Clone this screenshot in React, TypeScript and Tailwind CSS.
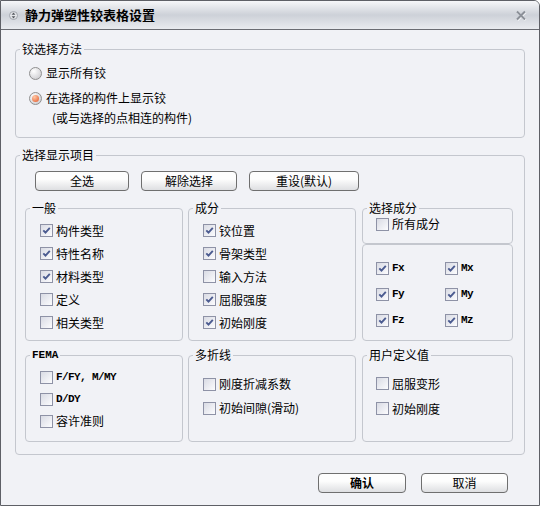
import React from "react";

const cjk = "font-['Noto_Sans_CJK_SC','Noto_Sans',sans-serif]";
const mono = "font-['Liberation_Mono',monospace]";

function Check({ on }: { on?: boolean }) {
  return (
    <span className="flex h-[13px] w-[13px] shrink-0 items-center justify-center border border-[#8e92a6] bg-linear-to-br from-[#d9dbe4] to-[#fcfcfe]">
      {on && (
        <svg width="9" height="9" viewBox="0 0 9 9">
          <path d="M1.3 4.3 L3.5 6.6 L7.8 1.9" stroke="#4b5b90" strokeWidth="1.9" fill="none" />
        </svg>
      )}
    </span>
  );
}

function Radio({ on }: { on?: boolean }) {
  return (
    <span className="flex h-[13px] w-[13px] shrink-0 items-center justify-center rounded-full border border-[#8f8f8f] bg-[radial-gradient(circle_at_35%_30%,#ffffff,#c4c4c8)]">
      {on && (
        <span className="h-[7px] w-[7px] rounded-full bg-[radial-gradient(circle_at_35%_30%,#ffc9a6,#e2582a)]" />
      )}
    </span>
  );
}

function CheckRow({ label, on, h, isMono }: { label: string; on?: boolean; h: string; isMono?: boolean }) {
  return (
    <div className={`flex items-center gap-[3px] ${h}`}>
      <Check on={on} />
      <span className={isMono ? `${mono} text-[11px] font-bold tracking-[-0.6px]` : ""}>{label}</span>
    </div>
  );
}

function Btn({ label, w, bold }: { label: string; w: string; bold?: boolean }) {
  return (
    <button
      className={`flex h-[20px] ${w} items-center justify-center rounded-[4px] border border-[#6f6f6f] bg-linear-to-b from-[#fdfdfd] from-40% to-[#dedfe2] text-[12px] leading-[14px] text-black ${
        bold ? "font-bold" : ""
      }`}
    >
      {label}
    </button>
  );
}

function Legend({ label, isMono }: { label: string; isMono?: boolean }) {
  return (
    <legend
      className={`ml-[4px] px-[2px] leading-[14px] ${
        isMono ? `${mono} text-[11px] font-bold` : "text-[12px]"
      }`}
    >
      {label}
    </legend>
  );
}

export default function App() {
  return (
    <div
      className={`flex h-[506px] w-[540px] flex-col overflow-hidden rounded-tr-[6px] border border-[#5e6066] bg-[#f1f2f6] text-[12px] leading-[14px] text-black ${cjk}`}
    >
      {/* title bar */}
      <div className="flex h-[29px] shrink-0 items-center border-b border-[#6a6c72] bg-linear-to-b from-[#f6f7f9] via-[#cdd1d8] to-[#e9ebef] pl-[8px] pr-[12px]">
        <svg width="9" height="9" viewBox="0 0 9 9" className="mr-[7px]">
          <circle cx="4.5" cy="4.5" r="4" fill="#e4e6ea" stroke="#a0a4ac" />
          <path d="M4.5 1.6 L6.4 3.8 L2.6 3.8 Z" fill="#55585e" />
          <path d="M4.5 7.4 L6.4 5.2 L2.6 5.2 Z" fill="#55585e" />
        </svg>
        <span className="text-[13px] font-bold">静力弹塑性铰表格设置</span>
        <svg width="12" height="11" viewBox="0 0 12 11" className="ml-auto">
          <path d="M2 1.5 L10 9.5 M10 1.5 L2 9.5" stroke="#f4f5f7" strokeWidth="2.4" transform="translate(0.6 0.6)" />
          <path d="M2 1.5 L10 9.5 M10 1.5 L2 9.5" stroke="#8b9098" strokeWidth="2" />
        </svg>
      </div>

      <div className="flex flex-1 flex-col px-[14px]">
        {/* hinge selection */}
        <fieldset className="mt-[12px] h-[96px] rounded-[4px] border border-[#c4c7ce]">
          <Legend label="铰选择方法" />
          <div className="pl-[13px] pt-[9px]">
            <div className="flex h-[16px] items-center gap-[4px]">
              <Radio />
              <span>显示所有铰</span>
            </div>
            <div className="mt-[9px] flex h-[16px] items-center gap-[4px]">
              <Radio on />
              <span>在选择的构件上显示铰</span>
            </div>
            <div className="mt-[5px] pl-[23px]">(或与选择的点相连的构件)</div>
          </div>
        </fieldset>

        {/* display items */}
        <fieldset className="mt-[10px] h-[307px] rounded-[4px] border border-[#c4c7ce]">
          <Legend label="选择显示项目" />
          <div className="pl-[9px] pt-[9px]">
            <div className="flex gap-[12px] pl-[10px]">
              <Btn label="全选" w="w-[94px]" />
              <Btn label="解除选择" w="w-[96px]" />
              <Btn label="重设(默认)" w="w-[110px]" />
            </div>

            <div className="mt-[10px] flex h-[140px]">
              <fieldset className="w-[158px] rounded-[4px] border border-[#c4c7ce]">
                <Legend label="一般" />
                <div className="pl-[14px] pt-[4px]">
                  <CheckRow h="h-[23px]" on label="构件类型" />
                  <CheckRow h="h-[23px]" on label="特性名称" />
                  <CheckRow h="h-[23px]" on label="材料类型" />
                  <CheckRow h="h-[23px]" label="定义" />
                  <CheckRow h="h-[23px]" label="相关类型" />
                </div>
              </fieldset>
              <fieldset className="ml-[5px] w-[168px] rounded-[4px] border border-[#c4c7ce]">
                <Legend label="成分" />
                <div className="pl-[14px] pt-[4px]">
                  <CheckRow h="h-[23px]" on label="铰位置" />
                  <CheckRow h="h-[23px]" on label="骨架类型" />
                  <CheckRow h="h-[23px]" label="输入方法" />
                  <CheckRow h="h-[23px]" on label="屈服强度" />
                  <CheckRow h="h-[23px]" on label="初始刚度" />
                </div>
              </fieldset>
              <div className="ml-[6px] flex w-[151px] flex-col">
                <fieldset className="h-[43px] rounded-[4px] border border-[#c4c7ce]">
                  <Legend label="选择成分" />
                  <div className="pl-[13px] pt-[1px]">
                    <CheckRow h="h-[16px]" label="所有成分" />
                  </div>
                </fieldset>
                <div className="grid flex-1 grid-cols-[69px_1fr] content-start rounded-[4px] border border-[#c4c7ce] pl-[13px] pt-[10px]">
                  <CheckRow h="h-[26px]" on isMono label="Fx" />
                  <CheckRow h="h-[26px]" on isMono label="Mx" />
                  <CheckRow h="h-[26px]" on isMono label="Fy" />
                  <CheckRow h="h-[26px]" on isMono label="My" />
                  <CheckRow h="h-[26px]" on isMono label="Fz" />
                  <CheckRow h="h-[26px]" on isMono label="Mz" />
                </div>
              </div>
            </div>

            <div className="mt-[7px] flex h-[94px]">
              <fieldset className="w-[158px] rounded-[4px] border border-[#c4c7ce]">
                <Legend label="FEMA" isMono />
                <div className="pl-[14px] pt-[4px]">
                  <CheckRow h="h-[22px]" isMono label="F/FY, M/MY" />
                  <CheckRow h="h-[22px]" isMono label="D/DY" />
                  <CheckRow h="h-[22px]" label="容许准则" />
                </div>
              </fieldset>
              <fieldset className="ml-[5px] w-[168px] rounded-[4px] border border-[#c4c7ce]">
                <Legend label="多折线" />
                <div className="pl-[14px] pt-[10px]">
                  <CheckRow h="h-[24px]" label="刚度折减系数" />
                  <CheckRow h="h-[24px]" label="初始间隙(滑动)" />
                </div>
              </fieldset>
              <fieldset className="ml-[6px] w-[151px] rounded-[4px] border border-[#c4c7ce]">
                <Legend label="用户定义值" />
                <div className="pl-[13px] pt-[9px]">
                  <CheckRow h="h-[25px]" label="屈服变形" />
                  <CheckRow h="h-[25px]" label="初始刚度" />
                </div>
              </fieldset>
            </div>
          </div>
        </fieldset>

        <div className="mt-[18px] flex justify-end gap-[15px] pr-[17px]">
          <Btn label="确认" w="w-[88px]" bold />
          <Btn label="取消" w="w-[87px]" />
        </div>
      </div>
    </div>
  );
}
